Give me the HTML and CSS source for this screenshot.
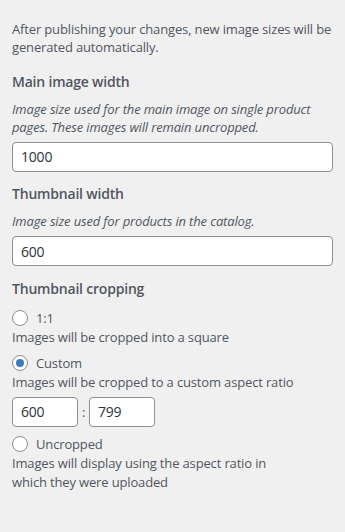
FILE: index.html
```html
<!DOCTYPE html>
<html>
<head>
<meta charset="utf-8">
<link rel="stylesheet" href="styles.css">
</head>
<body>
<div class="panel">
  <p class="note">After publishing your changes, new image sizes will be generated automatically.</p>

  <div class="control first">
    <h3 class="title">Main image width</h3>
    <p class="desc">Image size used for the main image on single product pages. These images will remain uncropped.</p>
    <input class="field" type="text" value="1000">
  </div>

  <div class="control">
    <h3 class="title">Thumbnail width</h3>
    <p class="desc">Image size used for products in the catalog.</p>
    <input class="field" type="text" value="600">
  </div>

  <div class="control">
    <h3 class="title">Thumbnail cropping</h3>
    <label class="choice first-choice"><input class="radio" type="radio" name="crop"><span>1:1</span></label>
    <p class="hint">Images will be cropped into a square</p>
    <label class="choice"><input class="radio" type="radio" name="crop" checked><span>Custom</span></label>
    <p class="hint">Images will be cropped to a custom aspect ratio</p>
    <div class="ratio">
      <input class="small" type="text" value="600">
      <span class="colon">:</span>
      <input class="small" type="text" value="799">
    </div>
    <label class="choice"><input class="radio" type="radio" name="crop"><span>Uncropped</span></label>
    <p class="hint last">Images will display using the aspect ratio in which they were uploaded</p>
  </div>
</div>
</body>
</html>
```

FILE: styles.css
```css
html, body {
  margin: 0;
  padding: 0;
  background: #f0f0f1;
}

body {
  font-family: "Open Sans", "Noto Sans", sans-serif;
  font-size: 13px;
  letter-spacing: -0.15px;
  color: #50575e;
}

.panel {
  padding: 20px 12px 20px 12px;
  display: flex;
  flex-direction: column;
}

.note {
  margin: 0;
  line-height: 18px;
}

.control {
  display: flex;
  flex-direction: column;
  margin-top: 12.5px;
}

.control.first {
  margin-top: 15.5px;
}

.title {
  margin: 0;
  font-size: 14px;
  font-weight: 600;
  line-height: 20px;
  letter-spacing: -0.2px;
  color: #50575e;
}

.desc {
  margin: 8px 0 0 0;
  font-style: italic;
  line-height: 18px;
}

.field {
  box-sizing: border-box;
  margin: 6px 0 0 0;
  width: 321px;
  height: 30px;
  border: 1px solid #8c8f94;
  border-radius: 4px;
  background: #fff;
  padding: 0 8px;
  font-family: "Open Sans", "Noto Sans", sans-serif;
  font-size: 14px;
  letter-spacing: -0.2px;
  color: #2c3338;
  outline: none;
}

.choice {
  display: flex;
  align-items: center;
  height: 18px;
  margin-top: 8px;
  line-height: 18px;
}

.choice.first-choice {
  margin-top: 10px;
}

.radio {
  -webkit-appearance: none;
  appearance: none;
  box-sizing: border-box;
  width: 16px;
  height: 16px;
  margin: 0 8px 0 0;
  border: 1px solid #8c8f94;
  border-radius: 50%;
  background: #fff;
  display: flex;
  align-items: center;
  justify-content: center;
}

.radio:checked::before {
  content: "";
  width: 8px;
  height: 8px;
  border-radius: 50%;
  background: #3b7bc8;
}

.hint {
  margin: 1px 0 0 0;
  line-height: 18px;
}

.hint.last {
  line-height: 19px;
  padding-right: 40px;
}

.ratio {
  display: flex;
  align-items: center;
  gap: 4px;
  margin-top: 6px;
}

.small {
  box-sizing: border-box;
  width: 66px;
  height: 30px;
  border: 1px solid #8c8f94;
  border-radius: 4px;
  background: #fff;
  padding: 0 8px;
  font-family: "Open Sans", "Noto Sans", sans-serif;
  font-size: 14px;
  letter-spacing: -0.2px;
  color: #2c3338;
  outline: none;
}

.colon {
  width: 3px;
  text-align: center;
  line-height: 18px;
}
```
